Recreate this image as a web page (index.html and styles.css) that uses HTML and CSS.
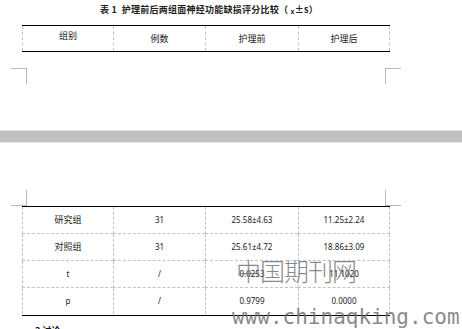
FILE: index.html
```html
<!DOCTYPE html>
<html lang="zh">
<head>
<meta charset="utf-8">
<link rel="stylesheet" href="styles.css">
</head>
<body>
<div class="screen">
  <section class="page page-top">
    <div class="content">
      <p class="caption">表 1&nbsp;&nbsp;护理前后两组面神经功能缺损评分比较（ <span class="xbar">x</span>±s）</p>
      <div class="table table-head">
        <div class="cell cell-top cjk">组别</div>
        <div class="cell cjk">例数</div>
        <div class="cell cjk">护理前</div>
        <div class="cell cjk">护理后</div>
      </div>
    </div>
    <div class="marks marks-top">
      <span class="mark mark-tl"></span>
      <span class="mark mark-tr"></span>
    </div>
  </section>

  <div class="page-gap"></div>

  <section class="page page-bottom">
    <div class="marks marks-bottom">
      <span class="mark mark-bl"></span>
      <span class="mark mark-br"></span>
    </div>
    <div class="content">
      <div class="table table-body">
        <div class="cell cjk">研究组</div>
        <div class="cell num">31</div>
        <div class="cell num">25.58±4.63</div>
        <div class="cell num">11.25±2.24</div>

        <div class="cell cjk">对照组</div>
        <div class="cell num">31</div>
        <div class="cell num">25.61±4.72</div>
        <div class="cell num">18.86±3.09</div>

        <div class="cell num">t</div>
        <div class="cell num">/</div>
        <div class="cell num">0.0253</div>
        <div class="cell num">11.1020</div>

        <div class="cell num last">p</div>
        <div class="cell num last">/</div>
        <div class="cell num last">0.9799</div>
        <div class="cell num last">0.0000</div>
      </div>
    </div>
    <p class="section-title">3 讨论</p>
  </section>

  <div class="watermark wm-cn">中国期刊网</div>
  <div class="watermark wm-url">www.chinaqking.com</div>
</div>
</body>
</html>
```

FILE: styles.css
```css
html, body {
  margin: 0;
  padding: 0;
  background: #ffffff;
}

.screen {
  position: relative;
  width: 462px;
  height: 329px;
  overflow: hidden;
  font-family: "Noto Sans CJK SC", "Noto Sans", sans-serif;
  color: #111;
}

.page {
  background: #fff;
}

.page-top {
  height: 130px;
  display: flex;
  flex-direction: column;
}

.content {
  margin-left: 22px;
  width: 368px;
}

.caption {
  margin: 4px 0 0 0;
  padding-left: 6px;
  height: 12px;
  line-height: 12px;
  font-size: 9px;
  font-weight: bold;
  letter-spacing: 0.25px;
  text-align: center;
  color: #222;
  white-space: nowrap;
}

.xbar {
  font-size: 7px;
  position: relative;
  top: 1px;
}

.table {
  display: grid;
  grid-template-columns: 91px 92px 93px 92px;
  border-top: 1px solid #000;
  border-bottom: 1px solid #000;
}

.table-head {
  margin-top: 9px;
  grid-auto-rows: 25px;
}

.table-body {
  grid-auto-rows: 27px;
}

.cell {
  display: flex;
  align-items: center;
  justify-content: center;
  border-left: 1px dashed #c4c4c4;
  font-size: 9px;
  line-height: 12px;
  color: #1a1a1a;
}

.cell:nth-child(4n) {
  border-right: 1px dashed #c4c4c4;
}

.table-body .cell {
  border-bottom: 1px dashed #c4c4c4;
}

.table-body .cell.last {
  border-bottom: none;
  height: 26px;
}

.cell-top {
  align-items: flex-start;
  padding-top: 4px;
}

.cjk {
  font-family: "Noto Sans CJK SC", sans-serif;
  font-size: 9px;
}

.num {
  font-family: "Noto Sans", "Noto Sans CJK SC", sans-serif;
  font-size: 8px;
}

.marks {
  display: flex;
  justify-content: space-between;
  margin-left: 11px;
  width: 390px;
}

.marks-top {
  margin-top: 16px;
}

.mark {
  display: block;
  width: 15px;
  height: 15px;
  border-color: #b8b8b8;
  border-style: solid;
  border-width: 0;
}

.mark-tl { border-top-width: 1px; border-right-width: 1px; }
.mark-tr { border-top-width: 1px; border-left-width: 1px; }
.mark-bl { border-bottom-width: 1px; border-right-width: 1px; }
.mark-br { border-bottom-width: 1px; border-left-width: 1px; }

.page-gap {
  height: 11px;
  background: #c0c0c0;
  border-top: 1px solid #e0e0e0;
  border-bottom: 1px solid #e8e8e8;
}

.page-bottom {
  padding-top: 47px;
}

.section-title {
  margin: 9px 0 0 35px;
  font-size: 9px;
  font-weight: bold;
  line-height: 12px;
  color: #111;
}

.watermark {
  position: absolute;
  color: rgba(115, 115, 115, 0.85);
  white-space: nowrap;
  pointer-events: none;
}

.wm-cn {
  left: 236px;
  top: 254px;
  font-family: "Noto Sans CJK SC", sans-serif;
  font-weight: 300;
  font-size: 25px;
  line-height: 32px;
  letter-spacing: -1px;
}

.wm-url {
  left: 232px;
  top: 307px;
  font-family: "DejaVu Sans Mono", monospace;
  font-size: 21px;
  line-height: 21px;
}
```
